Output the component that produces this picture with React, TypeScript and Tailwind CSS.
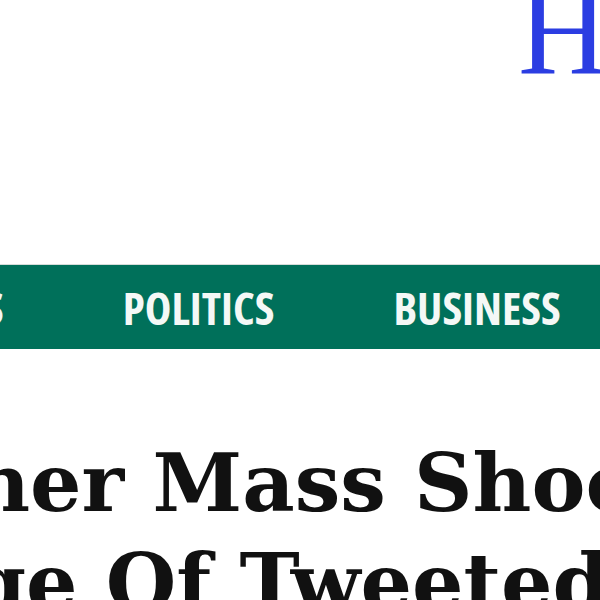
export default function App() {
    const navItems = ["NEWS", "POLITICS", "BUSINESS", "ENTERTAINMENT"];

    return (
        <div className="w-[600px] h-[600px] overflow-hidden bg-white">
            <header className="h-[264px] overflow-hidden">
                <div
                    className="pl-[518px] -mt-[31px] whitespace-nowrap text-[125px] leading-none text-[#2b3de2]"
                    style={{ fontFamily: '"Liberation Serif", serif' }}>
                    HUFFPOST
                </div>
            </header>
            <nav className="h-[85px] border-t border-[#d6dcd9] bg-[#00705a] flex items-center overflow-hidden">
                <ul
                    className="flex items-center gap-[119px] -ml-[98px] whitespace-nowrap text-[45px] font-bold leading-none text-[#f4f8f6]"
                    style={{ fontFamily: '"Open Sans", sans-serif', fontStretch: "75%" }}>
                    {navItems.map((item) => (
                        <li key={item}>{item}</li>
                    ))}
                </ul>
            </nav>
            <main className="pt-[84px] overflow-hidden">
                <h1
                    className="-ml-[242px] whitespace-nowrap text-[81px] font-bold leading-[100px] text-[#111111]"
                    style={{ fontFamily: '"DejaVu Serif", serif' }}>
                    <span className="block">Another Mass Shooting,</span>
                    <span className="block">Deluge Of Tweeted Prayers</span>
                </h1>
            </main>
        </div>
    );
}
